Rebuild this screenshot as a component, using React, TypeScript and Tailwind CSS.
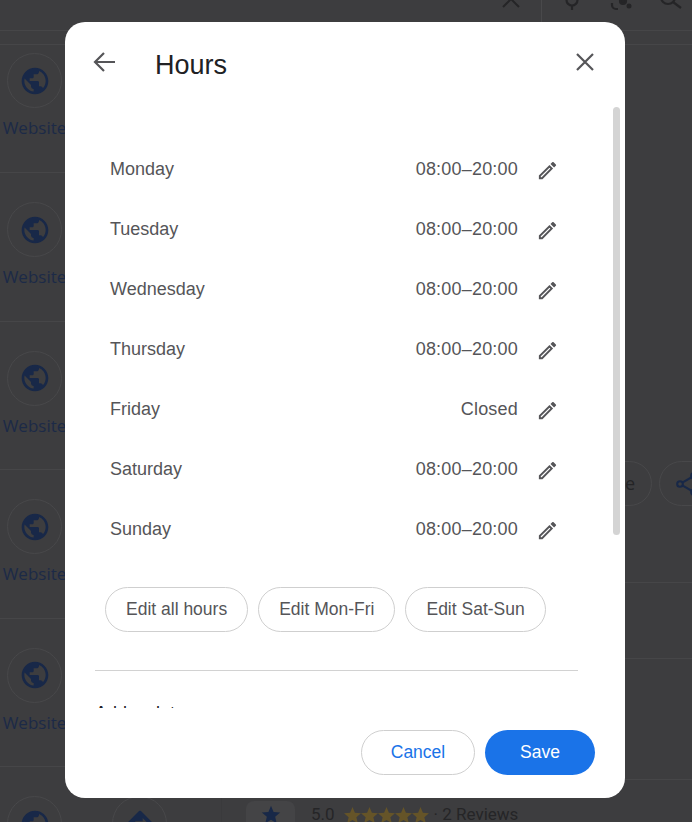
const days = [
  { name: 'Monday', hours: '08:00–20:00' },
  { name: 'Tuesday', hours: '08:00–20:00' },
  { name: 'Wednesday', hours: '08:00–20:00' },
  { name: 'Thursday', hours: '08:00–20:00' },
  { name: 'Friday', hours: 'Closed' },
  { name: 'Saturday', hours: '08:00–20:00' },
  { name: 'Sunday', hours: '08:00–20:00' },
];

const STAR = 'M12 17.27L18.18 21l-1.64-7.03L22 9.24l-7.19-.61L12 2 9.19 8.63 2 9.24l5.46 4.73L5.82 21z';

const Globe = () => (
  <svg width="32" height="32" viewBox="0 0 24 24" fill="#182848">
    <path d="M12 2C6.48 2 2 6.48 2 12s4.48 10 10 10 10-4.48 10-10S17.52 2 12 2zm-1 17.93c-3.95-.49-7-3.85-7-7.93 0-.62.08-1.21.21-1.79L9 15v1c0 1.1.9 2 2 2v1.93zm6.9-2.54c-.26-.81-1-1.39-1.9-1.39h-1v-3c0-.55-.45-1-1-1H8v-2h2c.55 0 1-.45 1-1V7h2c1.1 0 2-.9 2-2v-.41c2.93 1.19 5 4.06 5 7.41 0 2.08-.8 3.97-2.1 5.39z" />
  </svg>
);

const Directions = () => (
  <svg width="32" height="32" viewBox="0 0 24 24" fill="#182848">
    <path d="M21.71 11.29l-9-9c-.39-.39-1.02-.39-1.41 0l-9 9c-.39.39-.39 1.02 0 1.41l9 9c.39.39 1.02.39 1.41 0l9-9c.39-.38.39-1.01 0-1.41zM14 14.5V12h-4v3H8v-4c0-.55.45-1 1-1h5V7.5l3.5 3.5-3.5 3.5z" />
  </svg>
);

const Pencil = () => (
  <svg width="23" height="23" viewBox="0 0 24 24" fill="#555558" className="mt-[2px] shrink-0">
    <path d="M14.06 9.02l.92.92L5.92 19H5v-.92l9.06-9.06M17.66 3c-.25 0-.51.1-.7.29l-1.83 1.83 3.75 3.75 1.83-1.83c.39-.39.39-1.02 0-1.41l-2.34-2.34c-.2-.2-.45-.29-.71-.29zm-3.6 3.19L3 17.25V21h3.75L17.81 9.94l-3.75-3.75z" />
  </svg>
);

const ActionColumn = ({ label, children }: { label: string; children: React.ReactNode }) => (
  <div className="flex w-[55px] flex-col items-center">
    <div className="flex h-[55px] w-[55px] items-center justify-center rounded-full border border-[#48484a]">
      {children}
    </div>
    <span className="mt-[8px] font-['Open_Sans',sans-serif] text-[17px] leading-6 whitespace-nowrap text-[#1c2a47]">{label}</span>
  </div>
);

const Background = () => (
  <div className="flex h-full w-full flex-col bg-[#3d3d3f]">
    {/* top search bar, cut off by the window */}
    <div className="flex h-[31px] shrink-0 items-start overflow-hidden border-b border-[#464648]">
      <svg width="24" height="14" viewBox="0 0 24 14" fill="none" stroke="#252527" strokeWidth="2" className="ml-[499px]">
        <path d="M4 7l8-8 8 8" />
      </svg>
      <div className="ml-[18px] h-[22px] w-px bg-[#49494b]" />
      <svg width="24" height="14" viewBox="0 0 24 14" fill="none" stroke="#252527" strokeWidth="2.2" className="ml-[18px]">
        <circle cx="12" cy="0" r="5.5" />
        <path d="M12 5v5" />
      </svg>
      <svg width="30" height="14" viewBox="0 0 30 14" fill="none" stroke="#252527" strokeWidth="2.2" className="ml-[24px]">
        <circle cx="15" cy="1" r="3" fill="#252527" />
        <circle cx="21" cy="6" r="2.5" fill="#252527" stroke="none" />
        <path d="M4 3v2a4 4 0 0 0 4 4h2" />
      </svg>
      <svg width="24" height="14" viewBox="0 0 24 14" fill="none" stroke="#252527" strokeWidth="2.2" className="ml-[22px]">
        <circle cx="8" cy="-3" r="7" />
        <path d="M13 2l8 6" />
      </svg>
    </div>
    <div className="h-[14px] shrink-0 border-b border-[#464648]" />

    <div className="flex">
      {/* left list of places */}
      <div className="w-[221px] shrink-0">
        {[0, 1, 2, 3, 4, 5].map((i) => (
          <div
            key={i}
            className={
              i === 0
                ? 'flex h-[128px] gap-[50px] border-b border-[#464648] pt-[8px] pl-[7px]'
                : 'flex h-[148.6px] gap-[50px] border-b border-[#464648] pt-[29px] pl-[7px]'
            }
          >
            <ActionColumn label="Website">
              <Globe />
            </ActionColumn>
            <ActionColumn label="Directions">
              <Directions />
            </ActionColumn>
          </div>
        ))}
      </div>

      {/* right details panel */}
      <div className="flex-1 border-l border-[#3a3a3c] pt-[416px]">
        <div className="flex h-[45px] gap-[7px] pl-[337px]">
          <div className="flex h-[45px] w-[93px] shrink-0 items-center justify-end rounded-full border border-[#48484a] pr-[16px] font-['Open_Sans',sans-serif] text-[18px] text-[#242426]">
            More
          </div>
          <div className="flex h-[45px] w-[55px] shrink-0 items-center justify-center rounded-full border border-[#48484a]">
            <svg width="28" height="28" viewBox="0 0 24 24" fill="none" stroke="#182848" strokeWidth="1.8">
              <circle cx="18" cy="5" r="2.4" />
              <circle cx="6" cy="12" r="2.4" />
              <circle cx="18" cy="19" r="2.4" />
              <path d="M8 10.8l8-4.6M8 13.2l8 4.6" />
            </svg>
          </div>
        </div>
        <div className="h-[77px] border-b border-[#464648]" />
        <div className="h-[76px] border-b border-[#464648]" />
        <div className="h-[121px] border-b border-[#464648]" />
        <div className="flex items-start pt-[21px] pl-[24px]">
          <div className="flex h-[60px] w-[49px] justify-center rounded-lg bg-[#444446] pt-[3px]">
            <svg width="22" height="22" viewBox="0 0 24 24" fill="#182848">
              <path d={STAR} />
            </svg>
          </div>
          <div className="ml-[16px] flex h-[28px] items-center text-[17px] text-[#252527]">
            <span>5.0</span>
            <div className="mr-[5px] ml-[9px] flex">
              {[0, 1, 2, 3, 4].map((i) => (
                <svg key={i} width="17" height="17" viewBox="2 2 20 20" fill="#655428">
                  <path d={STAR} />
                </svg>
              ))}
            </div>
            <span>· 2 Reviews</span>
          </div>
        </div>
      </div>
    </div>
  </div>
);

const HoursDialog = () => (
  <div className="absolute top-[22px] left-[65px] flex h-[776px] w-[560px] flex-col overflow-hidden rounded-[20px] bg-white font-['Liberation_Sans',sans-serif]">
    <header className="flex h-[85px] shrink-0 items-start">
      <svg width="24" height="24" viewBox="0 0 24 24" fill="none" stroke="#555558" strokeWidth="2.2" className="mt-[28px] ml-[27px]">
        <path d="M23 12H3M12 3l-9 9 9 9" />
      </svg>
      <h2 className="mt-[25px] ml-[39px] text-[27px] leading-9 text-[#202124]">Hours</h2>
      <svg width="20" height="20" viewBox="0 0 20 20" fill="none" stroke="#555558" strokeWidth="2.2" className="mt-[30px] ml-auto mr-[30px]">
        <path d="M2 2l16 16M18 2L2 18" />
      </svg>
    </header>

    <div className="relative h-[601px] shrink-0 overflow-hidden pt-[32px]">
      <div className="absolute top-0 right-[5px] h-[428px] w-[7px] rounded bg-[#d4d4d4]" />
      <div>
        {days.map((d) => (
          <div key={d.name} className="flex h-[60px] items-center pr-[66px] pl-[45px] text-[18px] text-[#555558]">
            <span>{d.name}</span>
            <span className="mr-[18px] ml-auto tracking-[0.2px]">{d.hours}</span>
            <Pencil />
          </div>
        ))}
      </div>
      <div className="mt-[28px] flex gap-[10px] pl-[40px]">
        {['Edit all hours', 'Edit Mon-Fri', 'Edit Sat-Sun'].map((label) => (
          <button key={label} className="h-[45px] rounded-full border border-[#cfcfcf] px-[20px] text-[17.5px] text-[#555558]">
            {label}
          </button>
        ))}
      </div>
      <div className="mt-[38px] mr-[47px] ml-[30px] border-t border-[#d2d2d2]" />
      <p className="mt-[30px] ml-[30px] text-[18px] leading-6 text-[#202124]">Add a slot</p>
    </div>

    <footer className="flex flex-1 items-start justify-end gap-[10px] pt-[22px] pr-[30px]">
      <button className="h-[45px] w-[114px] rounded-full border border-[#cfcfcf] text-[17.5px] text-[#1a73e8]">Cancel</button>
      <button className="h-[45px] w-[110px] rounded-full bg-[#1a73e8] text-[17.5px] text-white">Save</button>
    </footer>
  </div>
);

export default function App() {
  return (
    <div className="relative h-[822px] w-[692px] overflow-hidden font-['Roboto',sans-serif]">
      <Background />
      <HoursDialog />
    </div>
  );
}
